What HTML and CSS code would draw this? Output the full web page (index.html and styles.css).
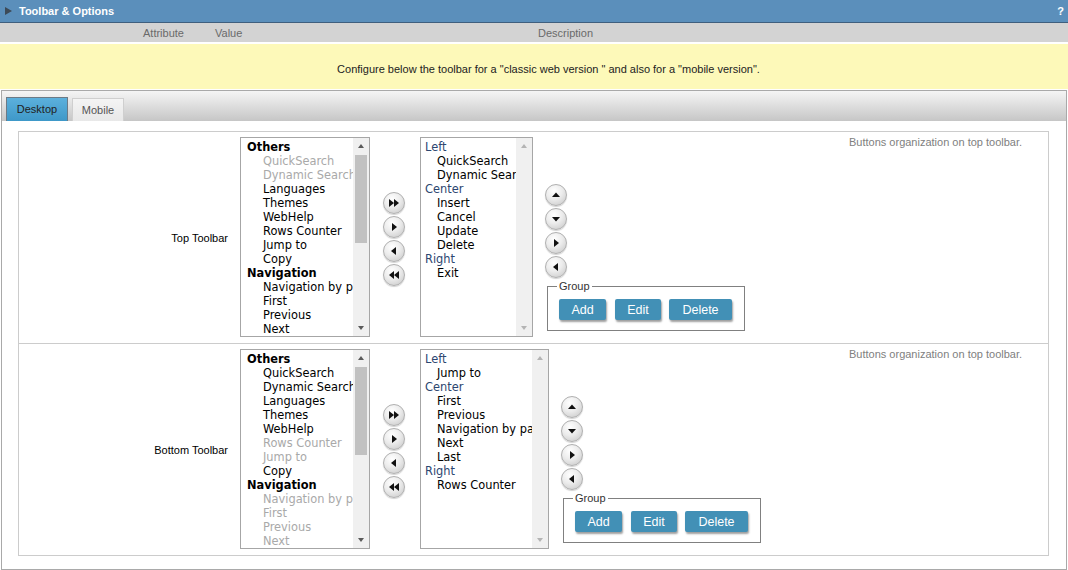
FILE: index.html
```html
<!DOCTYPE html>
<html>
<head>
<meta charset="utf-8">
<link rel="stylesheet" href="styles.css">
</head>
<body>
<div class="header"><span class="tri"></span><span class="title">Toolbar &amp; Options</span><span class="help">?</span></div>
<div class="cols"><span class="c-attr">Attribute</span><span class="c-val">Value</span><span class="c-desc">Description</span></div>
<div class="notice">Configure below the toolbar for a "classic web version " and also for a "mobile version".</div>
<div class="panel">
  <div class="tabs"><div class="tab active">Desktop</div><div class="tab">Mobile</div></div>
  <div class="table">
    <div class="row first">
      <div class="label">Top Toolbar</div>
      <div class="value">
        <div class="list l1">
          <div class="items">
            <div class="g">Others</div>
            <div class="i d">QuickSearch</div>
            <div class="i d">Dynamic Search</div>
            <div class="i">Languages</div>
            <div class="i">Themes</div>
            <div class="i">WebHelp</div>
            <div class="i">Rows Counter</div>
            <div class="i">Jump to</div>
            <div class="i">Copy</div>
            <div class="g">Navigation</div>
            <div class="i">Navigation by page</div>
            <div class="i">First</div>
            <div class="i">Previous</div>
            <div class="i">Next</div>
          </div>
          <div class="sb"><div class="sb-up"></div><div class="sb-track"><div class="thumb"></div></div><div class="sb-down"></div></div>
        </div>
        <div class="arrows">
          <div class="rbtn"><svg width="12" height="10" viewBox="0 0 12 10"><path d="M1 1 L6 5 L1 9Z M6 1 L11 5 L6 9Z"/></svg></div>
          <div class="rbtn"><svg width="8" height="10" viewBox="0 0 8 10"><path d="M2 1 L7 5 L2 9Z"/></svg></div>
          <div class="rbtn"><svg width="8" height="10" viewBox="0 0 8 10"><path d="M6 1 L1 5 L6 9Z"/></svg></div>
          <div class="rbtn"><svg width="12" height="10" viewBox="0 0 12 10"><path d="M6 1 L1 5 L6 9Z M11 1 L6 5 L11 9Z"/></svg></div>
        </div>
        <div class="list l2">
          <div class="items">
            <div class="gc">Left</div>
            <div class="j">QuickSearch</div>
            <div class="j">Dynamic Search</div>
            <div class="gc">Center</div>
            <div class="j">Insert</div>
            <div class="j">Cancel</div>
            <div class="j">Update</div>
            <div class="j">Delete</div>
            <div class="gc">Right</div>
            <div class="j">Exit</div>
          </div>
          <div class="sb off"><div class="sb-up"></div><div class="sb-track"></div><div class="sb-down"></div></div>
        </div>
        <div class="side">
          <div class="moves">
            <div class="rbtn"><svg width="10" height="8" viewBox="0 0 10 8"><path d="M1 6 L5 1.5 L9 6Z"/></svg></div>
            <div class="rbtn"><svg width="10" height="8" viewBox="0 0 10 8"><path d="M1 2 L5 6.5 L9 2Z"/></svg></div>
            <div class="rbtn"><svg width="8" height="10" viewBox="0 0 8 10"><path d="M2 1 L7 5 L2 9Z"/></svg></div>
            <div class="rbtn"><svg width="8" height="10" viewBox="0 0 8 10"><path d="M6 1 L1 5 L6 9Z"/></svg></div>
          </div>
          <fieldset class="group">
            <legend>Group</legend>
            <div class="btns"><span class="btn b-add">Add</span><span class="btn b-edit">Edit</span><span class="btn b-del">Delete</span></div>
          </fieldset>
        </div>
      </div>
      <div class="desc">Buttons organization on top toolbar.</div>
    </div>
    <div class="row">
      <div class="label">Bottom Toolbar</div>
      <div class="value">
        <div class="list l1">
          <div class="items">
            <div class="g">Others</div>
            <div class="i">QuickSearch</div>
            <div class="i">Dynamic Search</div>
            <div class="i">Languages</div>
            <div class="i">Themes</div>
            <div class="i">WebHelp</div>
            <div class="i d">Rows Counter</div>
            <div class="i d">Jump to</div>
            <div class="i">Copy</div>
            <div class="g">Navigation</div>
            <div class="i d">Navigation by page</div>
            <div class="i d">First</div>
            <div class="i d">Previous</div>
            <div class="i d">Next</div>
          </div>
          <div class="sb"><div class="sb-up"></div><div class="sb-track"><div class="thumb"></div></div><div class="sb-down"></div></div>
        </div>
        <div class="arrows">
          <div class="rbtn"><svg width="12" height="10" viewBox="0 0 12 10"><path d="M1 1 L6 5 L1 9Z M6 1 L11 5 L6 9Z"/></svg></div>
          <div class="rbtn"><svg width="8" height="10" viewBox="0 0 8 10"><path d="M2 1 L7 5 L2 9Z"/></svg></div>
          <div class="rbtn"><svg width="8" height="10" viewBox="0 0 8 10"><path d="M6 1 L1 5 L6 9Z"/></svg></div>
          <div class="rbtn"><svg width="12" height="10" viewBox="0 0 12 10"><path d="M6 1 L1 5 L6 9Z M11 1 L6 5 L11 9Z"/></svg></div>
        </div>
        <div class="list l2 wide">
          <div class="items">
            <div class="gc">Left</div>
            <div class="j">Jump to</div>
            <div class="gc">Center</div>
            <div class="j">First</div>
            <div class="j">Previous</div>
            <div class="j">Navigation by page</div>
            <div class="j">Next</div>
            <div class="j">Last</div>
            <div class="gc">Right</div>
            <div class="j">Rows Counter</div>
          </div>
          <div class="sb off"><div class="sb-up"></div><div class="sb-track"></div><div class="sb-down"></div></div>
        </div>
        <div class="side">
          <div class="moves">
            <div class="rbtn"><svg width="10" height="8" viewBox="0 0 10 8"><path d="M1 6 L5 1.5 L9 6Z"/></svg></div>
            <div class="rbtn"><svg width="10" height="8" viewBox="0 0 10 8"><path d="M1 2 L5 6.5 L9 2Z"/></svg></div>
            <div class="rbtn"><svg width="8" height="10" viewBox="0 0 8 10"><path d="M2 1 L7 5 L2 9Z"/></svg></div>
            <div class="rbtn"><svg width="8" height="10" viewBox="0 0 8 10"><path d="M6 1 L1 5 L6 9Z"/></svg></div>
          </div>
          <fieldset class="group">
            <legend>Group</legend>
            <div class="btns"><span class="btn b-add">Add</span><span class="btn b-edit">Edit</span><span class="btn b-del">Delete</span></div>
          </fieldset>
        </div>
      </div>
      <div class="desc">Buttons organization on top toolbar.</div>
    </div>
  </div>
</div>
</body>
</html>
```
FILE: styles.css
```css
* { box-sizing: border-box; }
html, body { margin: 0; padding: 0; }
body {
  width: 1068px;
  height: 570px;
  overflow: hidden;
  background: #fff;
  color: #000;
  font-family: "Liberation Sans", Arial, sans-serif;
  font-size: 11px;
}
.header {
  height: 23px;
  background: #5b8fbb;
  border-bottom: 1px solid #3f5f7e;
  display: flex;
  align-items: center;
  color: #fff;
  font-weight: bold;
  font-size: 11px;
}
.tri {
  width: 0; height: 0;
  border-left: 7px solid #3d4a57;
  border-top: 4px solid transparent;
  border-bottom: 4px solid transparent;
  margin: 0 7px 0 5px;
}
.help { margin-left: auto; margin-right: 4px; font-size: 11px; }
.cols {
  height: 19px;
  background: #d3d3d3;
  color: #6a6a6a;
  display: flex;
  align-items: center;
  margin-bottom: 2px;
}
.c-attr { margin-left: 143px; width: 72px; }
.c-val { width: 323px; }
.notice {
  height: 45px;
  background: #fdf9b9;
  text-align: center;
  padding-top: 18px;
  padding-left: 29px;
  line-height: 14px;
  color: #222;
  margin-bottom: 1px;
}
.panel {
  margin-left: 1px;
  width: 1066px;
  height: 480px;
  border: 1px solid #a9a9a9;
}
.tabs {
  height: 30px;
  background: linear-gradient(#f5f5f5, #c6c6c6);
  display: flex;
  align-items: flex-end;
  padding-left: 4px;
}
.tab {
  width: 52px;
  height: 23px;
  margin-left: 4px;
  background: linear-gradient(#f4f4f4, #e8e8e8);
  border: 1px solid #cfcfcf;
  border-bottom: none;
  color: #555;
  text-align: center;
  line-height: 22px;
}
.tab.active {
  width: 62px;
  height: 24px;
  margin-left: 0;
  background: linear-gradient(#5cb0dc, #3e98c8);
  border: 1px solid #6c7a86;
  border-bottom: none;
  color: #222;
  line-height: 23px;
}
.table {
  margin: 10px 17px 0 16px;
  border: 1px solid #cccccc;
}
.row {
  display: flex;
  height: 211px;
}
.row.first { height: 212px; border-bottom: 1px solid #cccccc; }
.label {
  width: 215px;
  text-align: right;
  padding-right: 6px;
  align-self: center;
}
.value {
  flex: 1;
  display: flex;
  align-items: flex-start;
  padding: 5px 0 0 6px;
}
.list {
  height: 200px;
  border: 1px solid #a6a6a6;
  display: flex;
  overflow: hidden;
  font-family: "DejaVu Sans", Verdana, sans-serif;
  font-size: 11.4px;
  line-height: 14px;
  color: #000;
}
.l1 { width: 130px; }
.l2 { width: 113px; }
.l2.wide { width: 129px; }
.items {
  flex: 1;
  min-width: 0;
  overflow: hidden;
  white-space: nowrap;
  padding-top: 2px;
}
.l1 .items { padding-left: 6px; }
.l2 .items { padding-left: 4px; }
.g { font-weight: bold; }
.i { padding-left: 16px; }
.j { padding-left: 12px; }
.d { color: #a9a9a9; }
.gc { color: #2d4670; }
.sb {
  width: 16px;
  background: #f0f0f0;
  display: flex;
  flex-direction: column;
}
.sb-up, .sb-down {
  height: 16px;
  display: flex;
  align-items: center;
  justify-content: center;
}
.sb-up::after {
  content: "";
  width: 0; height: 0;
  border-left: 3.5px solid transparent;
  border-right: 3.5px solid transparent;
  border-bottom: 4px solid #5a5a5a;
}
.sb-down::after {
  content: "";
  width: 0; height: 0;
  border-left: 3.5px solid transparent;
  border-right: 3.5px solid transparent;
  border-top: 4px solid #5a5a5a;
}
.sb.off .sb-up::after { border-bottom-color: #b4b4b4; }
.sb.off .sb-down::after { border-top-color: #b4b4b4; }
.sb-track { flex: 1; padding: 1px 2px 0 2px; }
.thumb { height: 88px; background: #c1c1c1; }
.arrows {
  display: flex;
  flex-direction: column;
  gap: 2px;
  margin: 55px 15px 0 13px;
}
.rbtn {
  width: 22px;
  height: 22px;
  border-radius: 50%;
  background: radial-gradient(circle at 40% 30%, #ffffff 0%, #ececec 45%, #c4c4c4 100%);
  border: 1px solid #b0b0b0;
  box-shadow: 0 1px 1px rgba(0,0,0,0.18);
  display: flex;
  align-items: center;
  justify-content: center;
}
.rbtn svg { display: block; fill: #111; }
.side { margin: 47px 0 0 12px; }
.moves { display: flex; flex-direction: column; gap: 2px; }
.group {
  width: 198px;
  margin: 1px 0 0 2px;
  padding: 0 8px 10px 11px;
  border: 1px solid #808080;
  min-inline-size: 0;
}
.group legend {
  padding: 0 2px;
  margin-left: -2px;
  font-size: 11px;
  line-height: 14px;
  color: #333;
}
.btns { display: flex; margin-top: 6px; }
.btn {
  height: 21px;
  background: #4290b6;
  color: #fff;
  font-size: 12.5px;
  border-radius: 2px;
  box-shadow: 1px 2px 2px rgba(0,0,0,0.38);
  display: flex;
  align-items: center;
  justify-content: center;
}
.b-add { width: 47px; margin-right: 9px; }
.b-edit { width: 46px; margin-right: 8px; }
.b-del { width: 63px; }
.desc {
  width: 205px;
  padding: 3px 0 0 6px;
  color: #808080;
  line-height: 14px;
}
```
